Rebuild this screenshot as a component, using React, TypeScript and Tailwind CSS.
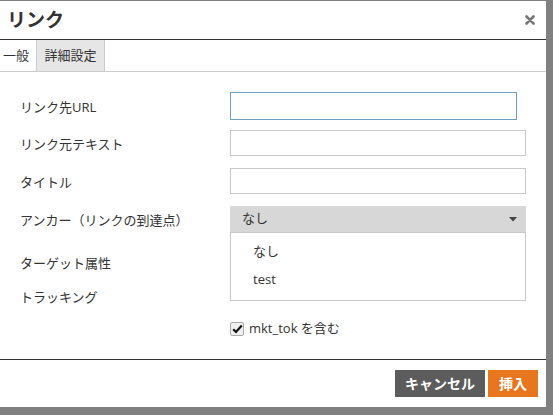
import React from 'react';

const font = { fontFamily: '"Open Sans", "Noto Sans CJK JP", sans-serif' };

const Field: React.FC<{ label: string; className?: string; children?: React.ReactNode }> = ({
  label,
  className = '',
  children,
}) => (
  <div className={`flex items-center ${className}`}>
    <span className="w-[230px] shrink-0 pl-[20px] pt-[4px] text-[13px] text-[#333]">{label}</span>
    {children}
  </div>
);

export default function App() {
  return (
    <div className="w-[553px] h-[415px] bg-[#808080] pt-[1px] overflow-hidden" style={font}>
      {/* dialog */}
      <div className="w-[546px] h-[406px] bg-white flex flex-col">
        {/* header */}
        <header className="h-[39px] flex items-center justify-between border-b border-[#333] pl-[7px] pr-[8px]">
          <h1 className="text-[19px] font-bold text-[#333] leading-none">リンク</h1>
          <svg width="10" height="10" viewBox="0 0 10 10" className="mr-[3px]">
            <path d="M1.5 1.5 L8.5 8.5 M8.5 1.5 L1.5 8.5" stroke="#777" strokeWidth="2.6" strokeLinecap="round" />
          </svg>
        </header>

        {/* tabs */}
        <nav className="h-[32px] flex border-b border-[#ccc] text-[13px] text-[#333]">
          <div className="w-[36px] flex items-center pl-[3px]">一般</div>
          <div className="w-[69px] flex items-center justify-center bg-[#e6e6e6] border-x border-[#ccc]">
            詳細設定
          </div>
        </nav>

        {/* form */}
        <main className="flex-1 flex flex-col">
          <Field label="リンク先URL" className="mt-[20px] h-[28px]">
            <div className="w-[287px] h-[28px] border border-[#6d9fc2]" />
          </Field>
          <Field label="リンク元テキスト" className="mt-[10px] h-[26px]">
            <div className="w-[296px] h-[26px] border border-[#c8c8c8]" />
          </Field>
          <Field label="タイトル" className="mt-[12px] h-[26px]">
            <div className="w-[296px] h-[26px] border border-[#c8c8c8]" />
          </Field>
          <Field label="アンカー（リンクの到達点）" className="mt-[12px] h-[26px] relative z-10">
            <div className="relative w-[296px] h-[26px]">
              <div className="h-full bg-[#d7d7d7] flex items-center justify-between pl-[12px] pr-[9px] text-[13px] text-[#333]">
                <span>なし</span>
                <svg width="8" height="5" viewBox="0 0 8 5">
                  <path d="M0 0 H8 L4 4.5 Z" fill="#444" />
                </svg>
              </div>
              {/* open dropdown */}
              <ul className="absolute left-0 top-full w-full bg-white border border-[#c8c8c8] pt-[5px] pb-[6px] text-[13px] text-[#333]">
                <li className="h-[28px] flex items-center pl-[22px]">なし</li>
                <li className="h-[28px] flex items-center pl-[22px]">test</li>
              </ul>
            </div>
          </Field>
          <Field label="ターゲット属性" className="mt-[17px] h-[26px]" />
          <Field label="トラッキング" className="mt-[8px] h-[26px]" />
          <div className="mt-[10px] pl-[230px] flex items-center gap-[5px] text-[13px] text-[#333]">
            <span className="w-[14px] h-[14px] border border-[#a9a9a9] bg-[#f0f0f0] rounded-[2px] flex items-center justify-center">
              <svg width="11" height="10" viewBox="0 0 11 10">
                <path d="M1.2 5.2 L4 8 L9.8 1.6" stroke="#111" strokeWidth="2.2" fill="none" />
              </svg>
            </span>
            <span>mkt_tok を含む</span>
          </div>
        </main>

        {/* footer */}
        <footer className="h-[48px] border-t border-[#333] flex items-start justify-end gap-[3px] pt-[10px] pr-[8px]">
          <button className="w-[90px] h-[27px] bg-[#5c5c5c] text-white text-[14px] font-bold">キャンセル</button>
          <button className="w-[50px] h-[27px] bg-[#e8761f] text-white text-[14px] font-bold">挿入</button>
        </footer>
      </div>
    </div>
  );
}
